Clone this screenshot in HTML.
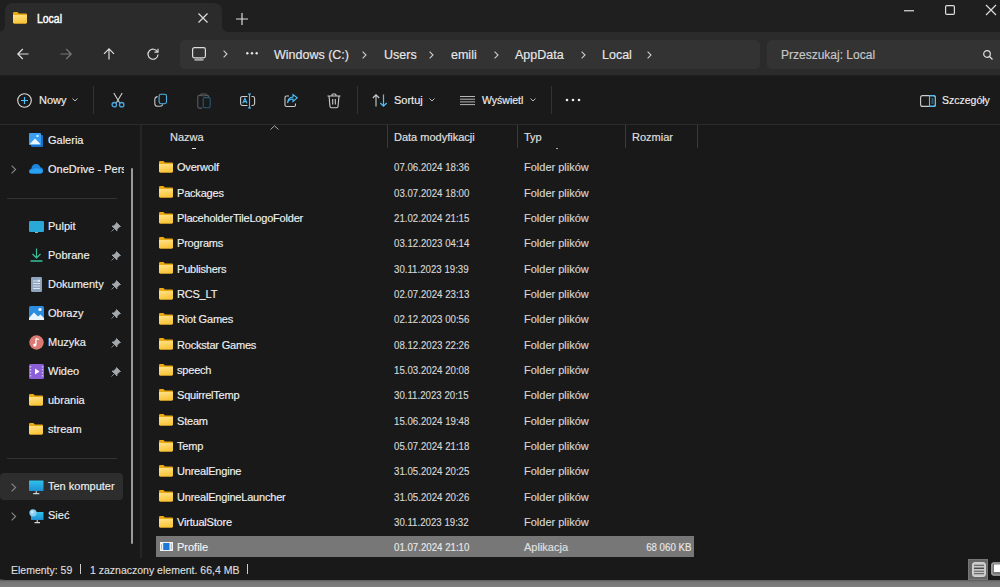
<!DOCTYPE html>
<html><head><meta charset="utf-8">
<style>
*{margin:0;padding:0;box-sizing:border-box}
html,body{width:1000px;height:587px;overflow:hidden;background:linear-gradient(to bottom,#191919 0,#191919 579px,#5a5a5a 580px,#777 582px,#7e7e7e 587px);font-family:"Liberation Sans",sans-serif;color:#fff}
.abs{position:absolute}
#title{position:absolute;left:0;top:0;width:1000px;height:32px;background:#1f1f1f}
#tab{position:absolute;left:5px;top:3px;width:217px;height:29px;background:#2b2b2b;border-radius:8px 8px 0 0}
#nav{position:absolute;left:0;top:32px;width:1000px;height:43px;background:#2b2b2b}
#addr{position:absolute;left:180px;top:40px;width:580px;height:29px;background:#333;border-radius:5px}
#search{position:absolute;left:767px;top:40px;width:240px;height:29px;background:#333;border-radius:5px}
#cmd{position:absolute;left:0;top:75px;width:1000px;height:50px;background:#1a1a1a;border-top:1px solid #1f1f1f;border-bottom:1px solid #2b2b2b}
.t{position:absolute;white-space:nowrap;line-height:1;-webkit-text-stroke:0.15px currentColor}
svg{position:absolute;overflow:visible}
.row{position:absolute;left:156px;width:538px;height:21px}
.nm{position:absolute;left:177px;font-size:11px;color:#f0f0f0;white-space:nowrap;letter-spacing:-0.2px}
.dt{position:absolute;left:394px;font-size:11px;color:#d6d6d6;white-space:nowrap;transform:scaleX(0.88);transform-origin:0 0}
.tp{position:absolute;left:524px;font-size:11px;color:#d6d6d6;white-space:nowrap}
.side{position:absolute;left:48px;font-size:11px;color:#f0f0f0;white-space:nowrap}
</style></head><body>
<svg width="0" height="0" style="position:absolute"><defs>
<linearGradient id="fg" x1="0" y1="0" x2="0.3" y2="1"><stop offset="0" stop-color="#ffe38a"/><stop offset="1" stop-color="#f9c53a"/></linearGradient>
<g id="fold"><path d="M0 1.2 Q0 0 1.2 0 H4.8 L6.3 1.5 H13.8 Q15 1.5 15 2.7 V10.8 Q15 12 13.8 12 H1.2 Q0 12 0 10.8Z" fill="#e9a912"/><path d="M0 3 H15 V10.8 Q15 12 13.8 12 H1.2 Q0 12 0 10.8Z" fill="url(#fg)"/></g>
</defs></svg>
<div id="win" style="position:absolute;left:0;top:0;width:1000px;height:580px;background:#191919;border-radius:0 0 0 5px"></div>
<div id="title"></div>
<div id="tab"><div style="position:absolute;left:-6px;bottom:0;width:6px;height:6px;background:radial-gradient(circle at 0 0,transparent 5.5px,#2b2b2b 6.2px)"></div><div style="position:absolute;right:-6px;bottom:0;width:6px;height:6px;background:radial-gradient(circle at 100% 0,transparent 5.5px,#2b2b2b 6.2px)"></div></div>
<div id="nav"></div>
<div id="addr"></div>
<div id="search"></div>
<div id="cmd"></div>

<!-- tab content -->
<svg style="left:13px;top:12px" width="14" height="11.5" viewBox="0 0 15 12" preserveAspectRatio="none"><path d="M0 1.2 Q0 0 1.2 0 H4.8 L6.3 1.5 H13.8 Q15 1.5 15 2.7 V10.8 Q15 12 13.8 12 H1.2 Q0 12 0 10.8Z" fill="#e9a912"/><path d="M0 3 H15 V10.8 Q15 12 13.8 12 H1.2 Q0 12 0 10.8Z" fill="url(#fg)"/></svg>
<div class="t" style="left:37px;top:13px;font-size:12px;color:#fff;-webkit-text-stroke:0.45px #fff;transform:scaleX(0.87);transform-origin:0 0">Local</div>
<svg style="left:198px;top:13px" width="10" height="10" viewBox="0 0 10 10"><path d="M0.5 0.5 L9.5 9.5 M9.5 0.5 L0.5 9.5" stroke="#ddd" stroke-width="1.2"/></svg>
<svg style="left:236px;top:13px" width="12" height="12" viewBox="0 0 12 12"><path d="M6 0 V12 M0 6 H12" stroke="#ddd" stroke-width="1.2"/></svg>

<!-- window controls -->
<svg style="left:904px;top:10px" width="10" height="2"><path d="M0 0.75 H10" stroke="#ddd" stroke-width="1.2"/></svg>
<svg style="left:945px;top:5px" width="10" height="10"><rect x="0.6" y="0.6" width="8.8" height="8.8" rx="1.2" fill="none" stroke="#ddd" stroke-width="1.2"/></svg>
<svg style="left:986px;top:5px" width="10" height="10"><path d="M0 0 L10 10 M10 0 L0 10" stroke="#ddd" stroke-width="1.2"/></svg>

<!-- nav icons -->
<svg style="left:17px;top:48px" width="12" height="12" viewBox="0 0 12 12"><path d="M11.5 6 H0.8 M5.8 1 L0.8 6 L5.8 11" fill="none" stroke="#ddd" stroke-width="1.2"/></svg>
<svg style="left:60px;top:48px" width="12" height="12" viewBox="0 0 12 12"><path d="M0.5 6 H11.2 M6.2 1 L11.2 6 L6.2 11" fill="none" stroke="#777" stroke-width="1.2"/></svg>
<svg style="left:103px;top:48px" width="12" height="12" viewBox="0 0 12 12"><path d="M6 11.5 V0.8 M1 5.8 L6 0.8 L11 5.8" fill="none" stroke="#ddd" stroke-width="1.2"/></svg>
<svg style="left:147px;top:48px" width="12" height="12" viewBox="0 0 12 12"><path d="M10.5 4 A5 5 0 1 0 11 6.5" fill="none" stroke="#ddd" stroke-width="1.2"/><path d="M7.5 4.2 L11 4.2 L11 0.8" fill="none" stroke="#ddd" stroke-width="1.2"/></svg>

<!-- address -->
<svg style="left:192px;top:47px" width="14" height="14" viewBox="0 0 14 14"><rect x="0.6" y="0.6" width="12.8" height="10.2" rx="1.8" fill="none" stroke="#ddd" stroke-width="1.2"/><path d="M2.5 12.9 H11.5" stroke="#ccc" stroke-width="1.3"/><path d="M5.5 11 V12 M8.5 11 V12" stroke="#aaa" stroke-width="0.8"/></svg>
<svg style="left:223px;top:50px" width="6" height="9"><path d="M0.6 0.6 L4 4 L0.6 7.4" fill="none" stroke="#ccc" stroke-width="1.1"/></svg>
<svg style="left:246px;top:52px" width="12" height="3"><circle cx="1.3" cy="1.3" r="1.2" fill="#e6e6e6"/><circle cx="6" cy="1.3" r="1.2" fill="#e6e6e6"/><circle cx="10.7" cy="1.3" r="1.2" fill="#e6e6e6"/></svg>
<div class="t" style="left:274px;top:49px;font-size:12.5px;color:#e8e8e8">Windows (C:)</div>
<svg style="left:362px;top:51px" width="6" height="8"><path d="M0.6 0.6 L4 4 L0.6 7.4" fill="none" stroke="#ccc" stroke-width="1.1"/></svg>
<div class="t" style="left:384px;top:49px;font-size:12.5px;color:#e8e8e8">Users</div>
<svg style="left:429px;top:51px" width="6" height="8"><path d="M0.6 0.6 L4 4 L0.6 7.4" fill="none" stroke="#ccc" stroke-width="1.1"/></svg>
<div class="t" style="left:451px;top:49px;font-size:12.5px;color:#e8e8e8">emili</div>
<svg style="left:494px;top:51px" width="6" height="8"><path d="M0.6 0.6 L4 4 L0.6 7.4" fill="none" stroke="#ccc" stroke-width="1.1"/></svg>
<div class="t" style="left:515px;top:49px;font-size:12.5px;color:#e8e8e8">AppData</div>
<svg style="left:581px;top:51px" width="6" height="8"><path d="M0.6 0.6 L4 4 L0.6 7.4" fill="none" stroke="#ccc" stroke-width="1.1"/></svg>
<div class="t" style="left:602px;top:49px;font-size:12.5px;color:#e8e8e8">Local</div>
<svg style="left:647px;top:51px" width="6" height="8"><path d="M0.6 0.6 L4 4 L0.6 7.4" fill="none" stroke="#ccc" stroke-width="1.1"/></svg>

<div class="t" style="left:781px;top:49px;font-size:12px;color:#c8c8c8">Przeszukaj: Local</div>
<svg style="left:983px;top:50px" width="10" height="10" viewBox="0 0 10 10"><circle cx="4" cy="4" r="3.3" fill="none" stroke="#ddd" stroke-width="1.2"/><path d="M6.5 6.5 L9.5 9.5" stroke="#ddd" stroke-width="1.3"/></svg>

<!-- command bar -->
<svg style="left:17px;top:93px" width="15" height="15" viewBox="0 0 15 15"><circle cx="7.5" cy="7.5" r="6.8" fill="none" stroke="#ddd" stroke-width="1.1"/><path d="M7.5 4 V11 M4 7.5 H11" stroke="#4cc2ff" stroke-width="1.2"/></svg>
<div class="t" style="left:39px;top:95px;font-size:11px;color:#eee">Nowy</div>
<svg style="left:72px;top:98px" width="6" height="4"><path d="M0.5 0.5 L3 3 L5.5 0.5" fill="none" stroke="#bbb" stroke-width="1"/></svg>
<div class="abs" style="left:93px;top:86px;width:1px;height:28px;background:#333"></div>
<svg style="left:111px;top:92px" width="14" height="16" viewBox="0 0 14 16"><path d="M2.8 1 L8.6 10.8 M11.2 1 L5.4 10.8" stroke="#cfcfcf" stroke-width="1.1" fill="none"/><circle cx="3.3" cy="12.7" r="2.2" fill="none" stroke="#48a8e0" stroke-width="1.3"/><circle cx="10.7" cy="12.7" r="2.2" fill="none" stroke="#48a8e0" stroke-width="1.3"/></svg>
<svg style="left:154px;top:93px" width="14" height="14" viewBox="0 0 14 14"><path d="M3.6 3.6 Q0.8 3.9 0.8 6.6 V10.4 Q0.8 13.2 3.6 13.2 H6 Q8.3 13.2 8.8 11.4" fill="none" stroke="#c4c4c4" stroke-width="1.1"/><rect x="5.1" y="1.2" width="7.4" height="9.5" rx="1.9" fill="none" stroke="#4cb4ec" stroke-width="1.1"/></svg>
<svg style="left:197px;top:93px" width="14" height="16" viewBox="0 0 14 16"><path d="M3.8 2.4 H2.6 Q0.8 2.4 0.8 4.2 V13.4 Q0.8 15.1 2.6 15.1 H5.2 M9.6 2.4 H10 Q11.8 2.4 11.8 4.2 V5 M4.6 1 H8.6 Q9.4 1 9.4 1.9 Q9.4 2.8 8.6 2.8 H4.6 Q3.8 2.8 3.8 1.9 Q3.8 1 4.6 1Z" fill="none" stroke="#5c5c5c" stroke-width="1.1"/><rect x="6.2" y="4.6" width="7" height="10.2" rx="1.6" fill="none" stroke="#265a7a" stroke-width="1.1"/></svg>
<svg style="left:240px;top:93px" width="16" height="16" viewBox="0 0 16 16"><path d="M7.5 3.5 H2.5 Q0.6 3.5 0.6 5.4 V10.6 Q0.6 12.5 2.5 12.5 H7.5 M11.5 3.5 H12.8 Q14.6 3.5 14.6 5.4 V10.6 Q14.6 12.5 12.8 12.5 H11.5" fill="none" stroke="#ccc" stroke-width="1.1"/><path d="M9.5 1 V15 M8 1 H11 M8 15 H11" stroke="#4cc2ff" stroke-width="1.1"/><path d="M2.8 10.3 L4.9 5.3 L7 10.3 M3.6 8.6 H6.2" stroke="#4cc2ff" stroke-width="1.1" fill="none"/></svg>
<svg style="left:284px;top:94px" width="14" height="14" viewBox="0 0 14 14"><path d="M5 2 H2.5 Q1 2 1 3.5 V11 Q1 12.5 2.5 12.5 H10 Q11.5 12.5 11.5 11 V9.5" fill="none" stroke="#ccc" stroke-width="1.1"/><path d="M3.5 9 Q4.5 5 9 5 V7.5 L13.2 3.8 L9 0.6 V3 Q4 3.3 3.5 9Z" fill="none" stroke="#4cc2ff" stroke-width="1.1"/></svg>
<svg style="left:327px;top:93px" width="14" height="16" viewBox="0 0 14 16"><path d="M0.5 3 H13.5 M5 3 V2 Q5 1 6 1 H8 Q9 1 9 2 V3 M2 3 L3 13.5 Q3.1 14.8 4.4 14.8 H9.6 Q10.9 14.8 11 13.5 L12 3 M5.7 6 V11.5 M8.3 6 V11.5" fill="none" stroke="#ccc" stroke-width="1.1"/></svg>
<div class="abs" style="left:357px;top:86px;width:1px;height:28px;background:#333"></div>
<svg style="left:372px;top:94px" width="16" height="13" viewBox="0 0 16 13"><path d="M4 12.5 V1 M0.8 4 L4 0.8 L7.2 4" fill="none" stroke="#ccc" stroke-width="1.1"/><path d="M11.5 0.5 V12 M8.3 9 L11.5 12.2 L14.7 9" fill="none" stroke="#4cc2ff" stroke-width="1.2"/></svg>
<div class="t" style="left:394px;top:95px;font-size:11px;color:#eee">Sortuj</div>
<svg style="left:429px;top:98px" width="6" height="4"><path d="M0.5 0.5 L3 3 L5.5 0.5" fill="none" stroke="#bbb" stroke-width="1"/></svg>
<svg style="left:460px;top:95px" width="15" height="11" viewBox="0 0 15 11"><path d="M0 1.5 H15 M0 4.2 H15 M0 6.9 H15 M0 9.6 H15" stroke="#c8c8c8" stroke-width="0.9"/></svg>
<div class="t" style="left:482px;top:95px;font-size:10.5px;color:#eee">Wyświetl</div>
<svg style="left:530px;top:98px" width="6" height="4"><path d="M0.5 0.5 L3 3 L5.5 0.5" fill="none" stroke="#bbb" stroke-width="1"/></svg>
<div class="abs" style="left:551px;top:86px;width:1px;height:28px;background:#333"></div>
<svg style="left:565px;top:98px" width="16" height="4"><circle cx="2" cy="2" r="1.3" fill="#eee"/><circle cx="8" cy="2" r="1.3" fill="#eee"/><circle cx="14" cy="2" r="1.3" fill="#eee"/></svg>
<svg style="left:920px;top:95px" width="16" height="12" viewBox="0 0 16 12"><rect x="0.6" y="0.6" width="14.8" height="10.8" rx="2" fill="none" stroke="#ccc" stroke-width="1.1"/><path d="M9.5 0.6 H13.4 Q15.4 0.6 15.4 2.6 V9.4 Q15.4 11.4 13.4 11.4 H9.5 Z" fill="none" stroke="#4cc2ff" stroke-width="1.1"/><path d="M11.5 4 H13.5 M11.5 6 H13.5 M11.5 8 H13.5" stroke="#4cc2ff" stroke-width="0.8"/></svg>
<div class="t" style="left:942px;top:95px;font-size:10.5px;color:#eee">Szczegóły</div>

<!-- sidebar -->
<div class="abs" style="left:140px;top:125px;width:2px;height:433px;background:#252525"></div>
<div class="abs" style="left:131px;top:168px;width:2px;height:376px;background:#9a9a9a;border-radius:1px"></div>
<div class="abs" style="left:7px;top:198px;width:110px;height:1px;background:#333"></div>
<div class="abs" style="left:7px;top:458px;width:110px;height:1px;background:#333"></div>
<div class="abs" style="left:0;top:473px;width:123px;height:27px;background:#2d2d2d;border-radius:4px"></div>

<svg style="left:29px;top:133px" width="14" height="14" viewBox="0 0 14 14"><rect x="2" y="2" width="12" height="12" rx="1" fill="#1a6fc9"/><rect x="0" y="0" width="12" height="12" rx="1" fill="#3a9ff0"/><path d="M0.5 11.3 L6 5.5 L11.5 11.3Z" fill="#eaf5ff"/><rect x="7.5" y="2" width="2" height="2" fill="#e0f0ff"/></svg>
<div class="t side" style="top:135px">Galeria</div>
<svg style="left:11px;top:165px" width="6" height="9"><path d="M0.6 0.6 L4.6 4.5 L0.6 8.4" fill="none" stroke="#888" stroke-width="1.1"/></svg>
<svg style="left:29px;top:163px" width="14" height="11" viewBox="0 0 14 11"><path d="M2.2 10.5 Q0 10.5 0 8.2 Q0 6 2.3 5.8 Q3 1 7 1 Q10.3 1 11.2 4.3 Q14 4.6 14 7.5 Q14 10.5 11.2 10.5Z" fill="#1b86e0"/><path d="M0.2 8.6 Q1 6.2 4 6.6 Q6 4.5 9 5.5 Q11.5 5 13.8 7.5 Q14 10.5 11.2 10.5 H2.2 Q0.3 10.5 0.2 8.6Z" fill="#2aa0f2"/></svg>
<div class="t side" style="top:164px;width:76px;overflow:hidden">OneDrive - Personal</div>

<svg style="left:29px;top:221px" width="15" height="12" viewBox="0 0 15 12"><rect x="0" y="0" width="15" height="11" rx="1.2" fill="#2aa9d8"/><path d="M6 11.5 H9" stroke="#7bc" stroke-width="1"/></svg>
<div class="t side" style="top:221px">Pulpit</div>
<svg style="left:30px;top:248px" width="13" height="14" viewBox="0 0 13 14"><path d="M6.5 0.5 V10 M2.5 6 L6.5 10 L10.5 6" fill="none" stroke="#35c29a" stroke-width="1.2"/><path d="M0.5 13 H12.5" stroke="#35c29a" stroke-width="1.5"/></svg>
<div class="t side" style="top:250px">Pobrane</div>
<svg style="left:31px;top:277px" width="11" height="15" viewBox="0 0 11 15"><rect x="0" y="0" width="11" height="15" rx="1.2" fill="#8fa3bd"/><path d="M2 4 H6 M2 6.5 H9 M2 9 H9 M2 11.5 H9" stroke="#e6ecf4" stroke-width="0.9"/><rect x="6.5" y="2.8" width="2.5" height="2" fill="#e6ecf4"/></svg>
<div class="t side" style="top:279px">Dokumenty</div>
<svg style="left:29px;top:306px" width="15" height="14" viewBox="0 0 15 14"><rect x="0" y="0" width="15" height="14" rx="1.5" fill="#2c8de0"/><path d="M0 12 L5 6.5 L9 10.5 L11.5 8.5 L15 12 V14 H0Z" fill="#e8f4ff"/><circle cx="11" cy="3.5" r="1.6" fill="#fff"/></svg>
<div class="t side" style="top:308px">Obrazy</div>
<svg style="left:29px;top:335px" width="15" height="15" viewBox="0 0 15 15"><circle cx="7.5" cy="7.5" r="7.2" fill="#dd7a74"/><path d="M7 3.5 V9.5 M7 3.5 L10 4.5" stroke="#fff" stroke-width="1.3" fill="none"/><circle cx="5.8" cy="10" r="1.6" fill="#fff"/></svg>
<div class="t side" style="top:337px">Muzyka</div>
<svg style="left:29px;top:364px" width="15" height="15" viewBox="0 0 15 15"><rect x="0" y="0" width="15" height="15" rx="1.5" fill="#8a5fd8"/><path d="M6 4.5 L10.5 7.5 L6 10.5Z" fill="#fff"/><path d="M1.5 2 V13 M13.5 2 V13" stroke="#c9b3f0" stroke-width="1.5" stroke-dasharray="1.5 1.5"/></svg>
<div class="t side" style="top:366px">Wideo</div>
<svg style="left:29px;top:394px" width="14" height="11.5" viewBox="0 0 15 12" preserveAspectRatio="none"><path d="M0 1.2 Q0 0 1.2 0 H4.8 L6.3 1.5 H13.8 Q15 1.5 15 2.7 V10.8 Q15 12 13.8 12 H1.2 Q0 12 0 10.8Z" fill="#e9a912"/><path d="M0 3 H15 V10.8 Q15 12 13.8 12 H1.2 Q0 12 0 10.8Z" fill="url(#fg)"/></svg>
<div class="t side" style="top:395px">ubrania</div>
<svg style="left:29px;top:423px" width="14" height="11.5" viewBox="0 0 15 12" preserveAspectRatio="none"><path d="M0 1.2 Q0 0 1.2 0 H4.8 L6.3 1.5 H13.8 Q15 1.5 15 2.7 V10.8 Q15 12 13.8 12 H1.2 Q0 12 0 10.8Z" fill="#e9a912"/><path d="M0 3 H15 V10.8 Q15 12 13.8 12 H1.2 Q0 12 0 10.8Z" fill="url(#fg)"/></svg>
<div class="t side" style="top:424px">stream</div>
<!-- pins -->
<svg style="left:111px;top:222px" width="10" height="10" viewBox="0 0 10 10"><path d="M5.5 0.5 L9.5 4.5 L8 5 L6 7.5 L6 9 L1 4 L2.5 4 L5 2Z M3.2 6.8 L0.5 9.5" fill="#a4a9ae" stroke="#a4a9ae" stroke-width="0.8"/></svg>
<svg style="left:111px;top:251px" width="10" height="10" viewBox="0 0 10 10"><path d="M5.5 0.5 L9.5 4.5 L8 5 L6 7.5 L6 9 L1 4 L2.5 4 L5 2Z M3.2 6.8 L0.5 9.5" fill="#a4a9ae" stroke="#a4a9ae" stroke-width="0.8"/></svg>
<svg style="left:111px;top:280px" width="10" height="10" viewBox="0 0 10 10"><path d="M5.5 0.5 L9.5 4.5 L8 5 L6 7.5 L6 9 L1 4 L2.5 4 L5 2Z M3.2 6.8 L0.5 9.5" fill="#a4a9ae" stroke="#a4a9ae" stroke-width="0.8"/></svg>
<svg style="left:111px;top:309px" width="10" height="10" viewBox="0 0 10 10"><path d="M5.5 0.5 L9.5 4.5 L8 5 L6 7.5 L6 9 L1 4 L2.5 4 L5 2Z M3.2 6.8 L0.5 9.5" fill="#a4a9ae" stroke="#a4a9ae" stroke-width="0.8"/></svg>
<svg style="left:111px;top:338px" width="10" height="10" viewBox="0 0 10 10"><path d="M5.5 0.5 L9.5 4.5 L8 5 L6 7.5 L6 9 L1 4 L2.5 4 L5 2Z M3.2 6.8 L0.5 9.5" fill="#a4a9ae" stroke="#a4a9ae" stroke-width="0.8"/></svg>
<svg style="left:111px;top:367px" width="10" height="10" viewBox="0 0 10 10"><path d="M5.5 0.5 L9.5 4.5 L8 5 L6 7.5 L6 9 L1 4 L2.5 4 L5 2Z M3.2 6.8 L0.5 9.5" fill="#a4a9ae" stroke="#a4a9ae" stroke-width="0.8"/></svg>

<svg style="left:11px;top:483px" width="6" height="9"><path d="M0.6 0.6 L4.6 4.5 L0.6 8.4" fill="none" stroke="#888" stroke-width="1.1"/></svg>
<svg style="left:29px;top:480px" width="15" height="15" viewBox="0 0 15 15"><defs><linearGradient id="mg" x1="0" y1="0" x2="0" y2="1"><stop offset="0" stop-color="#2fc3ec"/><stop offset="1" stop-color="#1f8fd4"/></linearGradient></defs><rect x="0" y="0.5" width="14.5" height="10.5" rx="0.6" fill="url(#mg)"/><path d="M7.25 11 V13.2 M4.2 13.6 H10.3" stroke="#cfd8dc" stroke-width="1.1"/></svg>
<div class="t side" style="top:481px">Ten komputer</div>
<svg style="left:11px;top:512px" width="6" height="9"><path d="M0.6 0.6 L4.6 4.5 L0.6 8.4" fill="none" stroke="#888" stroke-width="1.1"/></svg>
<svg style="left:29px;top:509px" width="15" height="15" viewBox="0 0 15 15"><rect x="2" y="3" width="12.5" height="8" rx="0.6" fill="url(#mg)"/><circle cx="4" cy="3.8" r="3.6" fill="#8ccdf2"/><circle cx="3.2" cy="3" r="1.5" fill="#c9ecff"/><path d="M8.25 11 V13.2 M5.5 13.6 H11" stroke="#cfd8dc" stroke-width="1.1"/></svg>
<div class="t side" style="top:510px">Sieć</div>

<!-- header -->
<div class="abs" style="left:192px;top:148px;width:4px;height:1px;background:#ddd"></div>
<div class="abs" style="left:556px;top:148px;width:2px;height:1px;background:#aaa"></div>
<div class="t" style="left:170px;top:132px;font-size:11px;color:#e0e0e0">Nazwa</div>
<svg style="left:270px;top:125px" width="9" height="5"><path d="M0.5 4.5 L4.5 0.8 L8.5 4.5" fill="none" stroke="#aaa" stroke-width="1"/></svg>
<div class="abs" style="left:387px;top:125px;width:1px;height:23px;background:#3a3a3a"></div>
<div class="t" style="left:394px;top:132px;font-size:11px;color:#e0e0e0">Data modyfikacji</div>
<div class="abs" style="left:517px;top:125px;width:1px;height:23px;background:#3a3a3a"></div>
<div class="t" style="left:524px;top:132px;font-size:11px;color:#e0e0e0">Typ</div>
<div class="abs" style="left:625px;top:125px;width:1px;height:23px;background:#3a3a3a"></div>
<div class="t" style="left:632px;top:132px;font-size:11px;color:#e0e0e0">Rozmiar</div>
<div class="abs" style="left:697px;top:125px;width:1px;height:23px;background:#3a3a3a"></div>

<svg style="left:159px;top:161px" width="14" height="11.5" viewBox="0 0 15 12" preserveAspectRatio="none"><path d="M0 1.2 Q0 0 1.2 0 H4.8 L6.3 1.5 H13.8 Q15 1.5 15 2.7 V10.8 Q15 12 13.8 12 H1.2 Q0 12 0 10.8Z" fill="#e9a912"/><path d="M0 3 H15 V10.8 Q15 12 13.8 12 H1.2 Q0 12 0 10.8Z" fill="url(#fg)"/></svg>
<div class="t nm" style="top:162px">Overwolf</div><div class="t dt" style="top:162px">07.06.2024 18:36</div><div class="t tp" style="top:162px">Folder plików</div>
<svg style="left:159px;top:186px" width="14" height="11.5" viewBox="0 0 15 12" preserveAspectRatio="none"><path d="M0 1.2 Q0 0 1.2 0 H4.8 L6.3 1.5 H13.8 Q15 1.5 15 2.7 V10.8 Q15 12 13.8 12 H1.2 Q0 12 0 10.8Z" fill="#e9a912"/><path d="M0 3 H15 V10.8 Q15 12 13.8 12 H1.2 Q0 12 0 10.8Z" fill="url(#fg)"/></svg>
<div class="t nm" style="top:188px">Packages</div><div class="t dt" style="top:188px">03.07.2024 18:00</div><div class="t tp" style="top:188px">Folder plików</div>
<svg style="left:159px;top:212px" width="14" height="11.5" viewBox="0 0 15 12" preserveAspectRatio="none"><path d="M0 1.2 Q0 0 1.2 0 H4.8 L6.3 1.5 H13.8 Q15 1.5 15 2.7 V10.8 Q15 12 13.8 12 H1.2 Q0 12 0 10.8Z" fill="#e9a912"/><path d="M0 3 H15 V10.8 Q15 12 13.8 12 H1.2 Q0 12 0 10.8Z" fill="url(#fg)"/></svg>
<div class="t nm" style="top:213px">PlaceholderTileLogoFolder</div><div class="t dt" style="top:213px">21.02.2024 21:15</div><div class="t tp" style="top:213px">Folder plików</div>
<svg style="left:159px;top:237px" width="14" height="11.5" viewBox="0 0 15 12" preserveAspectRatio="none"><path d="M0 1.2 Q0 0 1.2 0 H4.8 L6.3 1.5 H13.8 Q15 1.5 15 2.7 V10.8 Q15 12 13.8 12 H1.2 Q0 12 0 10.8Z" fill="#e9a912"/><path d="M0 3 H15 V10.8 Q15 12 13.8 12 H1.2 Q0 12 0 10.8Z" fill="url(#fg)"/></svg>
<div class="t nm" style="top:238px">Programs</div><div class="t dt" style="top:238px">03.12.2023 04:14</div><div class="t tp" style="top:238px">Folder plików</div>
<svg style="left:159px;top:262px" width="14" height="11.5" viewBox="0 0 15 12" preserveAspectRatio="none"><path d="M0 1.2 Q0 0 1.2 0 H4.8 L6.3 1.5 H13.8 Q15 1.5 15 2.7 V10.8 Q15 12 13.8 12 H1.2 Q0 12 0 10.8Z" fill="#e9a912"/><path d="M0 3 H15 V10.8 Q15 12 13.8 12 H1.2 Q0 12 0 10.8Z" fill="url(#fg)"/></svg>
<div class="t nm" style="top:264px">Publishers</div><div class="t dt" style="top:264px">30.11.2023 19:39</div><div class="t tp" style="top:264px">Folder plików</div>
<svg style="left:159px;top:288px" width="14" height="11.5" viewBox="0 0 15 12" preserveAspectRatio="none"><path d="M0 1.2 Q0 0 1.2 0 H4.8 L6.3 1.5 H13.8 Q15 1.5 15 2.7 V10.8 Q15 12 13.8 12 H1.2 Q0 12 0 10.8Z" fill="#e9a912"/><path d="M0 3 H15 V10.8 Q15 12 13.8 12 H1.2 Q0 12 0 10.8Z" fill="url(#fg)"/></svg>
<div class="t nm" style="top:289px">RCS_LT</div><div class="t dt" style="top:289px">02.07.2024 23:13</div><div class="t tp" style="top:289px">Folder plików</div>
<svg style="left:159px;top:313px" width="14" height="11.5" viewBox="0 0 15 12" preserveAspectRatio="none"><path d="M0 1.2 Q0 0 1.2 0 H4.8 L6.3 1.5 H13.8 Q15 1.5 15 2.7 V10.8 Q15 12 13.8 12 H1.2 Q0 12 0 10.8Z" fill="#e9a912"/><path d="M0 3 H15 V10.8 Q15 12 13.8 12 H1.2 Q0 12 0 10.8Z" fill="url(#fg)"/></svg>
<div class="t nm" style="top:314px">Riot Games</div><div class="t dt" style="top:314px">02.12.2023 00:56</div><div class="t tp" style="top:314px">Folder plików</div>
<svg style="left:159px;top:338px" width="14" height="11.5" viewBox="0 0 15 12" preserveAspectRatio="none"><path d="M0 1.2 Q0 0 1.2 0 H4.8 L6.3 1.5 H13.8 Q15 1.5 15 2.7 V10.8 Q15 12 13.8 12 H1.2 Q0 12 0 10.8Z" fill="#e9a912"/><path d="M0 3 H15 V10.8 Q15 12 13.8 12 H1.2 Q0 12 0 10.8Z" fill="url(#fg)"/></svg>
<div class="t nm" style="top:340px">Rockstar Games</div><div class="t dt" style="top:340px">08.12.2023 22:26</div><div class="t tp" style="top:340px">Folder plików</div>
<svg style="left:159px;top:364px" width="14" height="11.5" viewBox="0 0 15 12" preserveAspectRatio="none"><path d="M0 1.2 Q0 0 1.2 0 H4.8 L6.3 1.5 H13.8 Q15 1.5 15 2.7 V10.8 Q15 12 13.8 12 H1.2 Q0 12 0 10.8Z" fill="#e9a912"/><path d="M0 3 H15 V10.8 Q15 12 13.8 12 H1.2 Q0 12 0 10.8Z" fill="url(#fg)"/></svg>
<div class="t nm" style="top:365px">speech</div><div class="t dt" style="top:365px">15.03.2024 20:08</div><div class="t tp" style="top:365px">Folder plików</div>
<svg style="left:159px;top:389px" width="14" height="11.5" viewBox="0 0 15 12" preserveAspectRatio="none"><path d="M0 1.2 Q0 0 1.2 0 H4.8 L6.3 1.5 H13.8 Q15 1.5 15 2.7 V10.8 Q15 12 13.8 12 H1.2 Q0 12 0 10.8Z" fill="#e9a912"/><path d="M0 3 H15 V10.8 Q15 12 13.8 12 H1.2 Q0 12 0 10.8Z" fill="url(#fg)"/></svg>
<div class="t nm" style="top:390px">SquirrelTemp</div><div class="t dt" style="top:390px">30.11.2023 20:15</div><div class="t tp" style="top:390px">Folder plików</div>
<svg style="left:159px;top:414px" width="14" height="11.5" viewBox="0 0 15 12" preserveAspectRatio="none"><path d="M0 1.2 Q0 0 1.2 0 H4.8 L6.3 1.5 H13.8 Q15 1.5 15 2.7 V10.8 Q15 12 13.8 12 H1.2 Q0 12 0 10.8Z" fill="#e9a912"/><path d="M0 3 H15 V10.8 Q15 12 13.8 12 H1.2 Q0 12 0 10.8Z" fill="url(#fg)"/></svg>
<div class="t nm" style="top:416px">Steam</div><div class="t dt" style="top:416px">15.06.2024 19:48</div><div class="t tp" style="top:416px">Folder plików</div>
<svg style="left:159px;top:440px" width="14" height="11.5" viewBox="0 0 15 12" preserveAspectRatio="none"><path d="M0 1.2 Q0 0 1.2 0 H4.8 L6.3 1.5 H13.8 Q15 1.5 15 2.7 V10.8 Q15 12 13.8 12 H1.2 Q0 12 0 10.8Z" fill="#e9a912"/><path d="M0 3 H15 V10.8 Q15 12 13.8 12 H1.2 Q0 12 0 10.8Z" fill="url(#fg)"/></svg>
<div class="t nm" style="top:441px">Temp</div><div class="t dt" style="top:441px">05.07.2024 21:18</div><div class="t tp" style="top:441px">Folder plików</div>
<svg style="left:159px;top:465px" width="14" height="11.5" viewBox="0 0 15 12" preserveAspectRatio="none"><path d="M0 1.2 Q0 0 1.2 0 H4.8 L6.3 1.5 H13.8 Q15 1.5 15 2.7 V10.8 Q15 12 13.8 12 H1.2 Q0 12 0 10.8Z" fill="#e9a912"/><path d="M0 3 H15 V10.8 Q15 12 13.8 12 H1.2 Q0 12 0 10.8Z" fill="url(#fg)"/></svg>
<div class="t nm" style="top:466px">UnrealEngine</div><div class="t dt" style="top:466px">31.05.2024 20:25</div><div class="t tp" style="top:466px">Folder plików</div>
<svg style="left:159px;top:490px" width="14" height="11.5" viewBox="0 0 15 12" preserveAspectRatio="none"><path d="M0 1.2 Q0 0 1.2 0 H4.8 L6.3 1.5 H13.8 Q15 1.5 15 2.7 V10.8 Q15 12 13.8 12 H1.2 Q0 12 0 10.8Z" fill="#e9a912"/><path d="M0 3 H15 V10.8 Q15 12 13.8 12 H1.2 Q0 12 0 10.8Z" fill="url(#fg)"/></svg>
<div class="t nm" style="top:492px">UnrealEngineLauncher</div><div class="t dt" style="top:492px">31.05.2024 20:26</div><div class="t tp" style="top:492px">Folder plików</div>
<svg style="left:159px;top:516px" width="14" height="11.5" viewBox="0 0 15 12" preserveAspectRatio="none"><path d="M0 1.2 Q0 0 1.2 0 H4.8 L6.3 1.5 H13.8 Q15 1.5 15 2.7 V10.8 Q15 12 13.8 12 H1.2 Q0 12 0 10.8Z" fill="#e9a912"/><path d="M0 3 H15 V10.8 Q15 12 13.8 12 H1.2 Q0 12 0 10.8Z" fill="url(#fg)"/></svg>
<div class="t nm" style="top:517px">VirtualStore</div><div class="t dt" style="top:517px">30.11.2023 19:32</div><div class="t tp" style="top:517px">Folder plików</div>

<!-- selected profile -->
<div class="abs" style="left:156px;top:536px;width:538px;height:21px;background:#777"></div>
<svg style="left:160px;top:542px" width="13" height="9" viewBox="0 0 13 9"><rect x="0" y="0" width="13" height="9" fill="#f2f2f2"/><rect x="3.2" y="1" width="6.3" height="7" fill="#1a78d6"/><path d="M1.5 2 V7.5 M11.3 1.5 V7.5" stroke="#999" stroke-width="0.7"/></svg>
<div class="t" style="left:177px;top:542px;font-size:11px;color:#f4f4f4">Profile</div>
<div class="t" style="left:394px;top:542px;font-size:11px;color:#e8e8e8;transform:scaleX(0.88);transform-origin:0 0">01.07.2024 21:10</div>
<div class="t" style="left:524px;top:542px;font-size:11px;color:#e0e0e0">Aplikacja</div>
<div class="t" style="right:309px;top:542px;font-size:11px;color:#e8e8e8;transform:scaleX(0.88);transform-origin:100% 0">68 060 KB</div>

<!-- status -->
<div class="t" style="left:11px;top:565px;font-size:10.5px;color:#ddd">Elementy: 59</div>
<div class="abs" style="left:80px;top:564px;width:1px;height:10px;background:#ccc"></div>
<div class="t" style="left:90px;top:565px;font-size:10.5px;color:#ddd">1 zaznaczony element. 66,4 MB</div>
<div class="abs" style="left:247px;top:564px;width:1px;height:10px;background:#ccc"></div>
<div class="abs" style="left:968px;top:559px;width:20px;height:21px;background:#666;border:1px solid #777"></div>
<svg style="left:972px;top:562px" width="14" height="15" viewBox="0 0 14 15"><rect x="0.6" y="0.6" width="12.8" height="13.8" rx="2" fill="#c8c8c8" stroke="#d8d8d8" stroke-width="1"/><path d="M2 3.3 H12 M2 9.2 H12 M2 11.7 H12" stroke="#555" stroke-width="1"/><path d="M2 6.2 H12" stroke="#111" stroke-width="1"/></svg>
<svg style="left:991px;top:562px" width="12" height="14" viewBox="0 0 12 14"><rect x="0.8" y="0.8" width="11" height="12.4" rx="2" fill="#777" stroke="#aaa" stroke-width="1.3"/><rect x="3" y="2.5" width="9" height="7.5" fill="#fff"/></svg>
</body></html>
